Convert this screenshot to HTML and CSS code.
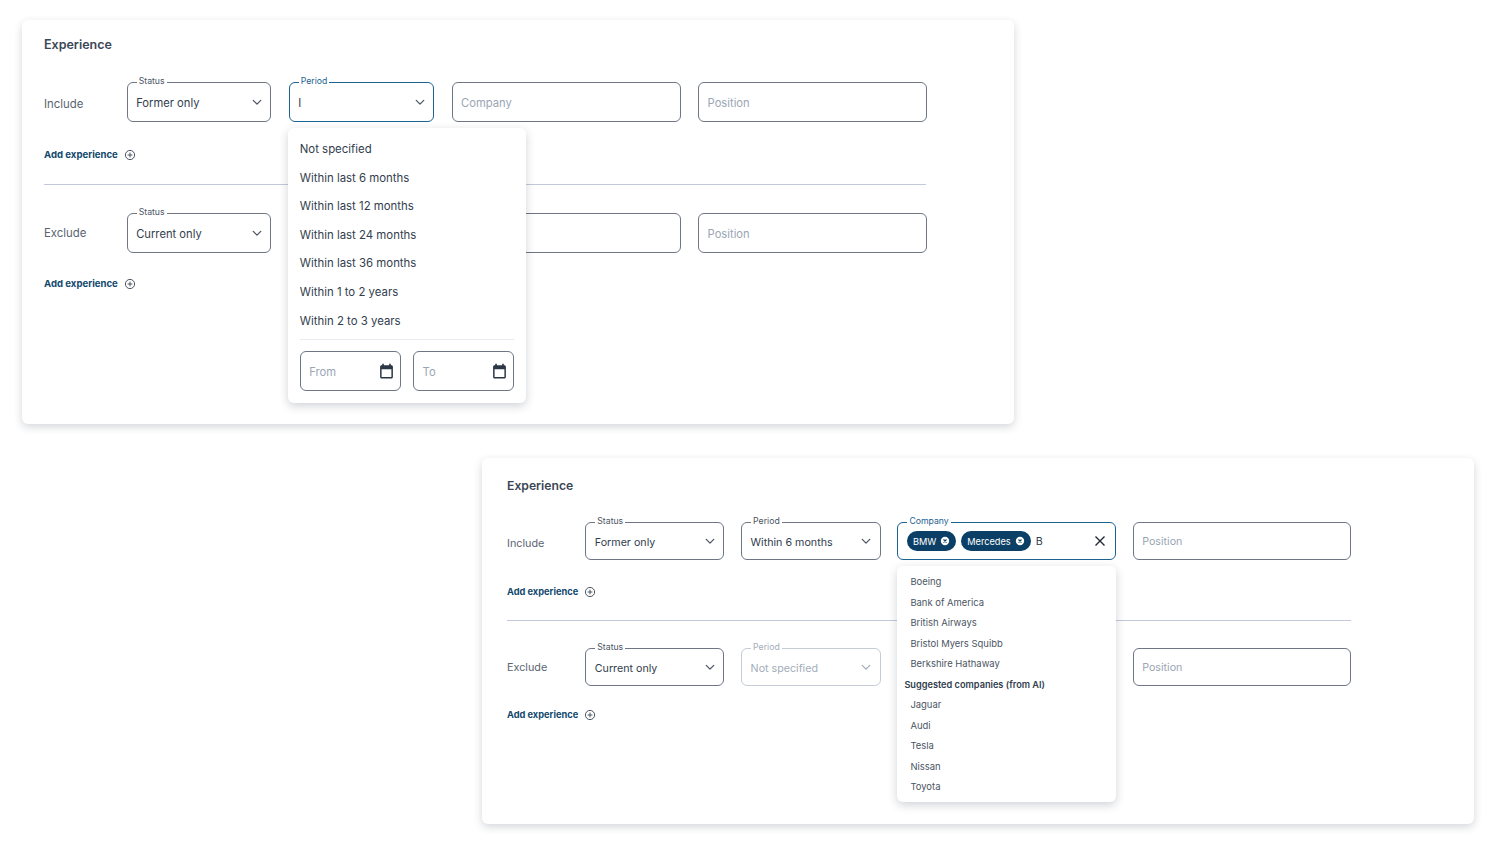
FILE: index.html
```html
<!DOCTYPE html>
<html lang="en">
<head>
    <meta charset="UTF-8">
    <title>Experience filter</title>
    <link rel="stylesheet" href="styles.css">
</head>
<body>
    <svg class="icon-defs" width="0" height="0">
        <symbol id="chevron" viewBox="0 0 12 8"><path d="M1.5 1.5 6 6l4.5-4.5" fill="none" stroke="currentColor" stroke-width="1.5" stroke-linecap="round" stroke-linejoin="round"/></symbol>
        <symbol id="plus-circle" viewBox="0 0 12 12"><circle cx="6" cy="6" r="4.6" fill="none" stroke="currentColor" stroke-width="1"/><path d="M6 3.6v4.8M3.6 6h4.8" stroke="currentColor" stroke-width="1"/></symbol>
        <symbol id="calendar" viewBox="0 0 14 15"><path d="M1 3.4C1 2.6 1.6 2 2.4 2H3V.6h1.5V2h5V.6H11V2h.6c.8 0 1.4.6 1.4 1.4v9.8c0 .8-.6 1.4-1.4 1.4H2.4c-.8 0-1.4-.6-1.4-1.4zM2.4 5.8v7.4h9.2V5.8z" fill="currentColor" fill-rule="evenodd"/></symbol>
        <symbol id="chip-x" viewBox="0 0 12 12"><circle cx="6" cy="6" r="5" fill="#fff"/><path d="M4.2 4.2l3.6 3.6M7.8 4.2 4.2 7.8" stroke="#0c3f65" stroke-width="1.3"/></symbol>
    </svg>

    <!-- Period dropdown open -->
    <section class="card card-period">
        <h2>Experience</h2>
        <div class="exp-row">
            <span class="row-label row-label-low">Include</span>
            <div class="field"><span class="field-tag">Status</span><span class="field-value">Former only</span><svg class="chevron"><use href="#chevron"/></svg></div>
            <div class="field field-active">
                <span class="field-tag">Period</span><span class="field-value">I</span><svg class="chevron"><use href="#chevron"/></svg>
                <div class="dropdown period-menu">
                    <ul>
                        <li>Not specified</li>
                        <li>Within last 6 months</li>
                        <li>Within last 12 months</li>
                        <li>Within last 24 months</li>
                        <li>Within last 36 months</li>
                        <li>Within 1 to 2 years</li>
                        <li>Within 2 to 3 years</li>
                    </ul>
                    <div class="date-range">
                        <div class="field"><span class="placeholder">From</span><svg class="calendar"><use href="#calendar"/></svg></div>
                        <div class="field"><span class="placeholder">To</span><svg class="calendar"><use href="#calendar"/></svg></div>
                    </div>
                </div>
            </div>
            <div class="field"><span class="placeholder">Company</span></div>
            <div class="field"><span class="placeholder">Position</span></div>
        </div>
        <a class="add-link" href="#">Add experience <svg><use href="#plus-circle"/></svg></a>
        <hr>
        <div class="exp-row">
            <span class="row-label">Exclude</span>
            <div class="field"><span class="field-tag">Status</span><span class="field-value">Current only</span><svg class="chevron"><use href="#chevron"/></svg></div>
            <div class="field"></div>
            <div class="field"></div>
            <div class="field"><span class="placeholder">Position</span></div>
        </div>
        <a class="add-link" href="#">Add experience <svg><use href="#plus-circle"/></svg></a>
    </section>

    <!-- Company dropdown open -->
    <section class="card card-company">
        <h2>Experience</h2>
        <div class="exp-row">
            <span class="row-label row-label-low">Include</span>
            <div class="field"><span class="field-tag">Status</span><span class="field-value">Former only</span><svg class="chevron"><use href="#chevron"/></svg></div>
            <div class="field"><span class="field-tag">Period</span><span class="field-value">Within 6 months</span><svg class="chevron"><use href="#chevron"/></svg></div>
            <div class="field field-active">
                <span class="field-tag">Company</span>
                <span class="chip">BMW <svg><use href="#chip-x"/></svg></span>
                <span class="chip">Mercedes <svg><use href="#chip-x"/></svg></span>
                <span class="typed">B</span>
                <svg class="clear" viewBox="0 0 12 12"><path d="M1.5 1.5l9 9M10.5 1.5l-9 9" stroke="currentColor" stroke-width="1.4"/></svg>
                <div class="dropdown company-menu">
                    <ul>
                        <li>Boeing</li>
                        <li>Bank of America</li>
                        <li>British Airways</li>
                        <li>Bristol Myers Squibb</li>
                        <li>Berkshire Hathaway</li>
                        <li class="menu-heading">Suggested companies (from AI)</li>
                        <li>Jaguar</li>
                        <li>Audi</li>
                        <li>Tesla</li>
                        <li>Nissan</li>
                        <li>Toyota</li>
                    </ul>
                </div>
            </div>
            <div class="field"><span class="placeholder">Position</span></div>
        </div>
        <a class="add-link" href="#">Add experience <svg><use href="#plus-circle"/></svg></a>
        <hr>
        <div class="exp-row">
            <span class="row-label">Exclude</span>
            <div class="field"><span class="field-tag">Status</span><span class="field-value">Current only</span><svg class="chevron"><use href="#chevron"/></svg></div>
            <div class="field field-disabled"><span class="field-tag">Period</span><span class="field-value">Not specified</span><svg class="chevron"><use href="#chevron"/></svg></div>
            <div class="field"></div>
            <div class="field"><span class="placeholder">Position</span></div>
        </div>
        <a class="add-link" href="#">Add experience <svg><use href="#plus-circle"/></svg></a>
    </section>
</body>
</html>
```
FILE: styles.css
```css
body {
    margin: 0;
    height: 844px;
    overflow: hidden;
    background-color: #fff;
    font-family: Inter, "Liberation Sans", sans-serif;
    color: #323d4d;
    padding-top: 20px;
    box-sizing: border-box;
}

.icon-defs {
    position: absolute;
}

.card {
    box-sizing: border-box;
    width: 992px;
    background-color: #fff;
    border-radius: 6px;
    box-shadow: 0 3px 8px rgba(40, 50, 70, 0.2);
}

.card h2 {
    margin: 0;
    font-size: 12.5px;
    line-height: 16px;
    font-weight: 600;
    color: #3b4655;
}

.card-period {
    height: 404px;
    margin-left: 22px;
    padding: 17px 88px 0 22px;
}

.card-company {
    height: 366px;
    margin: 34px 0 0 482px;
    padding: 20px 123px 0 25px;
}

.card-company h2 {
    font-size: 12.2px;
}

.exp-row {
    display: grid;
    align-items: center;
}

.card-period .exp-row {
    grid-template-columns: 65.2px 144.6px 145.3px 229px 229px;
    column-gap: 17.5px;
    height: 40px;
    margin-top: 29px;
}

.card-company .exp-row {
    grid-template-columns: 61.5px 139px 139.5px 218.5px 218.5px;
    column-gap: 16.8px;
    height: 38px;
    margin-top: 28px;
}

.card hr {
    border: 0;
    border-top: 1px solid #c3c8da;
    margin: 0;
}

.card-period hr {
    margin-top: 22px;
}

.card-company hr {
    margin-top: 21px;
}

.card-period hr + .exp-row {
    margin-top: 28px;
}

.card-company hr + .exp-row {
    margin-top: 27px;
}

.row-label {
    font-size: 11.4px;
    color: #5a6472;
}

.row-label-low {
    padding-top: 4px;
}

.card-company .row-label {
    font-size: 10.8px;
}

.field {
    position: relative;
    display: flex;
    align-items: center;
    box-sizing: border-box;
    height: 100%;
    padding: 0 8.5px;
    background-color: #fff;
    border: 1.5px solid #6d7682;
    border-radius: 6px;
    font-size: 11.2px;
}

.card-company .field {
    font-size: 10.7px;
}

.field-value {
    flex: 1;
    padding-top: 2px;
    color: #323d4d;
}

.placeholder {
    flex: 1;
    padding-top: 1px;
    color: #9aa5b4;
}

.field-tag {
    position: absolute;
    top: -7px;
    left: 9px;
    padding: 0 2px;
    background-color: #fff;
    font-size: 8.7px;
    line-height: 11px;
    color: #4b5563;
}

.field-active {
    border-color: #1c6391;
    gap: 5px;
}

.field-active .field-tag {
    color: #1c6391;
}

.field-disabled {
    border-color: #c6ccd6;
}

.field-disabled .field-tag,
.field-disabled .field-value,
.field-disabled .chevron {
    color: #a3adba;
}

.chevron {
    width: 10px;
    height: 7px;
    color: #4b5563;
}

.calendar {
    width: 15px;
    height: 16px;
    margin-right: -2px;
    color: #2c3745;
}

.add-link {
    display: flex;
    align-items: center;
    gap: 6px;
    font-size: 9.6px;
    font-weight: 700;
    line-height: 14px;
    color: #11486d;
    text-decoration: none;
}

.add-link svg {
    width: 12px;
    height: 12px;
    color: #4b5563;
}

.card-period .add-link {
    margin-top: 26px;
}

.card-period hr + .exp-row + .add-link {
    margin-top: 24px;
}

.card-company .add-link {
    margin-top: 25px;
    font-size: 9.25px;
}

.card-company hr + .exp-row + .add-link {
    margin-top: 22px;
}

.dropdown {
    position: absolute;
    z-index: 2;
    left: -1.5px;
    box-sizing: border-box;
    background-color: #fff;
    border-radius: 6px;
    box-shadow: 0 3px 10px rgba(40, 50, 70, 0.22);
}

.dropdown ul {
    list-style: none;
    margin: 0;
    padding: 0;
}

.period-menu {
    top: 45px;
    width: 237.5px;
    height: 275px;
    padding: 7px 11.5px 0;
}

.period-menu li {
    font-size: 11.4px;
    line-height: 28.6px;
}

.date-range {
    display: flex;
    gap: 12px;
    height: 40px;
    margin-top: 4px;
    padding-top: 11px;
    border-top: 1px solid #e8ebef;
}

.date-range .field {
    flex: 1;
}

.company-menu {
    top: 43px;
    width: 219px;
    height: 236px;
    padding: 6px 7.5px 0;
}

.company-menu li {
    padding-left: 6px;
    font-size: 9.45px;
    line-height: 20.5px;
    color: #4b5563;
}

.company-menu .menu-heading {
    padding-left: 0;
    font-size: 9.2px;
    font-weight: 600;
    color: #323d4d;
}

.chip {
    display: flex;
    align-items: center;
    gap: 4px;
    height: 20px;
    padding: 0 6px;
    border-radius: 10px;
    background-color: #0c3f65;
    color: #fff;
    font-size: 9.2px;
}

.chip svg {
    width: 10px;
    height: 10px;
}

.typed {
    flex: 1;
    font-size: 10.7px;
}

.clear {
    width: 12px;
    height: 12px;
    color: #1f2937;
}
```
